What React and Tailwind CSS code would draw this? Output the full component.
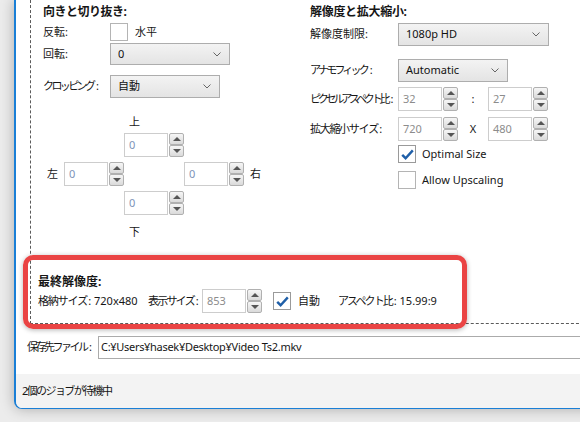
import React from "react";

const FONT = { fontFamily: '"Noto Sans", "Noto Sans CJK JP", sans-serif' };

function Chevron() {
  return (
    <svg width="8" height="5" viewBox="0 0 8 5" className="shrink-0">
      <polyline points="0.5,0.5 4,4 7.5,0.5" fill="none" stroke="#666" strokeWidth="1" />
    </svg>
  );
}

function Select({ text, className }) {
  return (
    <div
      className={`flex h-full items-center justify-between border border-[#adadad] bg-gradient-to-b from-[#f3f3f3] to-[#e4e4e4] pl-[7px] pr-[8px] text-[11px] text-[#111] ${className}`}
    >
      <span className="whitespace-nowrap">{text}</span>
      <Chevron />
    </div>
  );
}

function Tri({ up }) {
  return up ? (
    <div className="h-0 w-0 border-b-[4px] border-l-[4px] border-r-[4px] border-b-[#555] border-l-transparent border-r-transparent" />
  ) : (
    <div className="h-0 w-0 border-l-[4px] border-r-[4px] border-t-[4px] border-t-[#555] border-l-transparent border-r-transparent" />
  );
}

function Spin({ value, blue }) {
  return (
    <div className="flex h-[24px] w-[60px] shrink-0">
      <div
        className={`flex h-full w-[44px] items-center border border-[#cdcdcd] bg-white pl-[4px] text-[11px] ${
          blue ? "text-[#7d93b8]" : "text-[#8c8c8c]"
        }`}
      >
        {value}
      </div>
      <div className="ml-[1px] flex h-full w-[15px] flex-col">
        <div className="flex h-[12px] items-center justify-center rounded-[2px] border border-[#b0b0b0] bg-gradient-to-b from-[#f6f6f6] to-[#dadada]">
          <Tri up />
        </div>
        <div className="flex h-[12px] items-center justify-center rounded-[2px] border border-[#b0b0b0] bg-gradient-to-b from-[#f6f6f6] to-[#dadada]">
          <Tri />
        </div>
      </div>
    </div>
  );
}

function Check({ checked }) {
  return (
    <div
      className={`flex h-[18px] w-[18px] shrink-0 items-center justify-center border bg-white ${
        checked ? "border-[#9a9a9a]" : "border-[#b4b4b4]"
      }`}
    >
      {checked && (
        <svg width="13" height="11" viewBox="0 0 13 11">
          <path d="M1.2 5.8 L4.6 9.2 L11.8 1.4" fill="none" stroke="#1f5fa8" strokeWidth="2.4" />
        </svg>
      )}
    </div>
  );
}

export default function App() {
  return (
    <div
      className="relative h-[422px] w-[580px] overflow-hidden bg-[#ececec] pl-[14px] text-[#161616]"
      style={FONT}
    >
      <div className="flex h-[409px] w-[600px] flex-col overflow-hidden rounded-bl-[8px] border-b-[1.5px] border-l-2 border-[#1a7fd6] bg-white shadow-[0_0_14px_rgba(0,0,0,0.28)]">
        <div className="flex flex-1 flex-col">
          {/* group box */}
          <div className="ml-[14px] flex h-[324px] flex-col border-b border-l border-dashed border-[#5a5a5a]">
            <div className="grid h-[275px] grid-cols-[279px_1fr]">
              {/* left column */}
              <div className="flex flex-col pl-[12px]">
                <div className="mt-[4px] h-[16px] whitespace-nowrap text-[12px] font-bold leading-[16px] tracking-[-0.5px]">
                  向きと切り抜き:
                </div>
                <div className="mt-[3px] flex h-[18px] items-center text-[11px]">
                  <span className="w-[67px]">反転:</span>
                  <Check />
                  <span className="ml-[7px]">水平</span>
                </div>
                <div className="mt-[2px] flex h-[22px] items-center text-[11px]">
                  <span className="w-[67px]">回転:</span>
                  <Select text="0" className="w-[120px]" />
                </div>
                <div className="mt-[10px] flex h-[23px] items-center text-[11px]">
                  <span className="w-[67px] whitespace-nowrap">
                    <span className="tracking-[-2.6px]">クロッピン</span>グ:
                  </span>
                  <Select text="自動" className="w-[110px]" />
                </div>
                {/* crop cross */}
                <div className="mt-[17px] grid grid-cols-[81px_60px_76px] text-[11px]">
                  <div />
                  <div className="h-[14px] pl-[5px] leading-[14px]">上</div>
                  <div />
                  <div />
                  <div className="mt-[4px]">
                    <Spin value="0" blue />
                  </div>
                  <div />
                  <div className="mt-[5px] flex items-center justify-end gap-[6px]">
                    <span>左</span>
                    <Spin value="0" blue />
                  </div>
                  <div />
                  <div className="mt-[5px] flex items-center gap-[6px]">
                    <Spin value="0" blue />
                    <span>右</span>
                  </div>
                  <div />
                  <div className="mt-[5px]">
                    <Spin value="0" blue />
                  </div>
                  <div />
                  <div />
                  <div className="mt-[10px] h-[14px] pl-[5px] leading-[14px]">下</div>
                  <div />
                </div>
              </div>
              {/* right column */}
              <div className="flex flex-col text-[11px]">
                <div className="mt-[4px] h-[16px] whitespace-nowrap text-[12px] font-bold leading-[16px] tracking-[-0.3px]">
                  解像度と拡大縮小:
                </div>
                <div className="mt-[3px] flex h-[23px] items-center">
                  <span className="w-[88px] whitespace-nowrap">解像度制限:</span>
                  <Select text="1080p HD" className="w-[151px]" />
                </div>
                <div className="mt-[13px] flex h-[23px] items-center">
                  <span className="w-[88px] whitespace-nowrap">
                    <span className="tracking-[-2.8px]">アナモフィッ</span>ク:
                  </span>
                  <Select text="Automatic" className="w-[110px]" />
                </div>
                <div className="mt-[5px] flex h-[24px] items-center">
                  <span className="relative z-10 w-[88px] whitespace-nowrap">
                    <span className="tracking-[-3.2px]">ピクセルアスペクト</span>比:
                  </span>
                  <Spin value="32" />
                  <span className="w-[30px] text-center">:</span>
                  <Spin value="27" />
                </div>
                <div className="mt-[6px] flex h-[24px] items-center">
                  <span className="w-[88px] whitespace-nowrap">
                    <span className="tracking-[-1.3px]">拡大縮小サイ</span>ズ:
                  </span>
                  <Spin value="720" />
                  <span className="w-[30px] text-center">X</span>
                  <Spin value="480" />
                </div>
                <div className="mt-[4px] flex h-[18px] items-center pl-[88px]">
                  <Check checked />
                  <span className="ml-[6px]">Optimal Size</span>
                </div>
                <div className="mt-[8px] flex h-[18px] items-center pl-[88px]">
                  <Check />
                  <span className="ml-[6px]">Allow Upscaling</span>
                </div>
              </div>
            </div>
            {/* final resolution */}
            <div className="flex flex-col pl-[7px] text-[11px]">
              <div className="h-[14px] whitespace-nowrap text-[12px] font-bold leading-[14px]">最終解像度:</div>
              <div className="flex h-[24px] items-center whitespace-nowrap">
                <span className="w-[110px]">
                  <span className="tracking-[-1.2px]">格納サイ</span>ズ: 720x480
                </span>
                <span className="w-[54px]">
                  <span className="tracking-[-1.8px]">表示サイ</span>ズ:
                </span>
                <Spin value="853" />
                <div className="ml-[11px]">
                  <Check checked />
                </div>
                <span className="ml-[7px] w-[40px]">自動</span>
                <span>
                  <span className="tracking-[-1.9px]">アスペクト</span>比: 15.99:9
                </span>
              </div>
            </div>
          </div>
          {/* output file */}
          <div className="mt-[12px] flex h-[23px] items-center pl-[11px] text-[11px]">
            <span className="w-[71px] whitespace-nowrap">
              <span className="tracking-[-2.5px]">保存先ファイ</span>ル:
            </span>
            <div className="flex h-full flex-1 items-center border border-[#ababab] bg-white pl-[2px] tracking-[-0.3px]">
              C:¥Users¥hasek¥Desktop¥Video Ts2.mkv
            </div>
          </div>
        </div>
        <div className="flex h-[34px] items-center bg-[#f3f3f3] pl-[6px] text-[11px]">
          <span className="tracking-[-1.6px]">2個のジョブが待機中</span>
        </div>
      </div>
      {/* highlight annotation */}
      <div className="pointer-events-none absolute left-[23px] top-[255px] h-[74px] w-[444px] rounded-[10px] border-[5px] border-[#ea4444] shadow-[0_1px_5px_rgba(0,0,0,0.3)]" />
    </div>
  );
}
